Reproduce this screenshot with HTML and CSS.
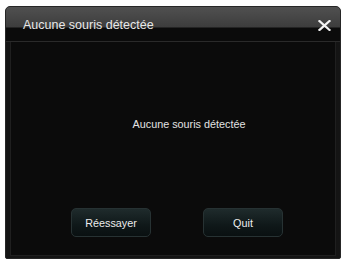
FILE: index.html
```html
<!DOCTYPE html>
<html lang="fr">
<head>
<meta charset="utf-8">
<link rel="stylesheet" href="styles.css">
</head>
<body>
<div class="win">
  <div class="titlebar">
    <span class="title">Aucune souris détectée</span>
    <svg class="close" width="13" height="11" viewBox="0 0 13 11"><path d="M1.5 1 L11.5 10 M11.5 1 L1.5 10" stroke="#f2f2f2" stroke-width="2.2" stroke-linecap="square"/></svg>
  </div>
  <div class="body">
    <div class="panel">
      <div class="msg">Aucune souris détectée</div>
      <div class="actions">
        <button class="btn">Réessayer</button>
        <button class="btn">Quit</button>
      </div>
    </div>
  </div>
</div>
</body>
</html>
```
FILE: styles.css
```css
html, body { margin: 0; padding: 0; background: #ffffff; }
body { padding: 6px 4px 1px 5px; font-family: "Liberation Sans", Arial, sans-serif; }
.win {
  width: 334px;
  height: 251px;
  border: 1px solid #262626;
  border-radius: 5px 5px 2px 2px;
  background: #141414;
  display: flex;
  flex-direction: column;
  overflow: hidden;
}
.titlebar {
  height: 35px;
  flex: none;
  display: flex;
  align-items: flex-start;
  justify-content: space-between;
  padding: 11px 9px 0 17px;
  box-sizing: border-box;
  background: linear-gradient(#505050 0px, #3d3d3d 20px, #0b0b0b 21px, #0b0b0b 100%);
  border-bottom: 1px solid #2a2a2a;
}
.title { color: #e8e8e8; font-size: 12.5px; line-height: 14px; }
.close { margin-top: 2px; }
.body { flex: 1; padding: 0 4px 2px 4px; display: flex; background: #141414; }
.panel {
  flex: 1;
  border: 1px solid #1f1f1f;
  border-top: none;
  background: #0b0b0b;
  display: flex;
  flex-direction: column;
}
.msg {
  margin-top: 75px;
  padding-left: 32px;
  text-align: center;
  color: #e2e2e2;
  font-size: 10.8px;
  line-height: 14px;
}
.actions {
  margin-top: auto;
  padding: 0 0 18px 60px;
  display: flex;
  gap: 52px;
}
.btn {
  width: 80px;
  height: 29px;
  border: 1px solid #273233;
  border-radius: 5px;
  background: linear-gradient(#1f2b2c, #0f1819 60%, #0a1011);
  color: #ececec;
  font-family: "Liberation Sans", Arial, sans-serif;
  font-size: 10.8px;
  padding: 0;
}
```
